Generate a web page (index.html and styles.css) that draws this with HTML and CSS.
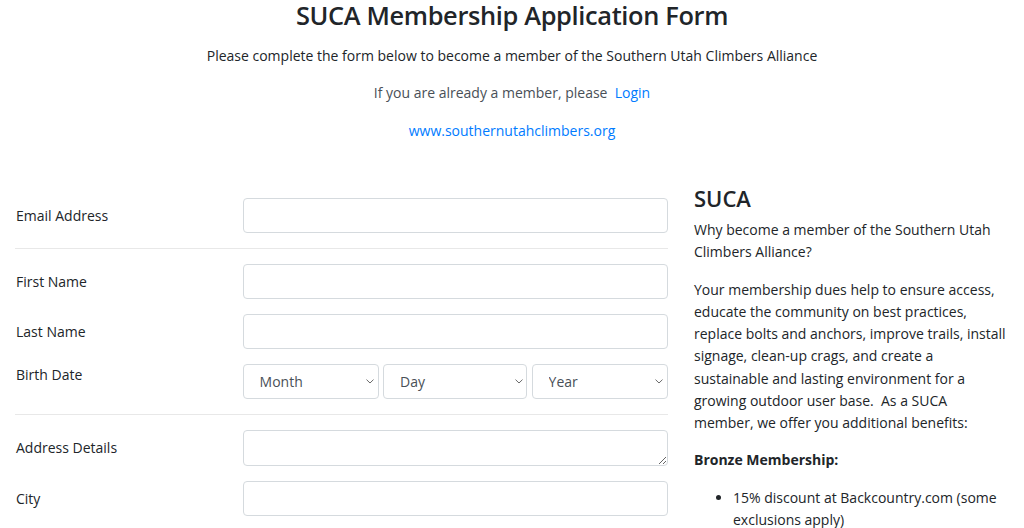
FILE: index.html
```html
<!DOCTYPE html>
<html lang="en">
<head>
<meta charset="utf-8">
<title>SUCA Membership Application Form</title>
<link rel="stylesheet" href="styles.css">
</head>
<body>
<header class="intro">
  <h1 class="title">SUCA Membership Application Form</h1>
  <p>Please complete the form below to become a member of the Southern Utah Climbers Alliance</p>
  <p class="muted">If you are already a member, please&nbsp; <a href="#">Login</a></p>
  <p><a href="#">www.southernutahclimbers.org</a></p>
</header>

<main class="layout">
  <form class="form">
    <div class="row">
      <label class="label col-label" for="email">Email Address</label>
      <input class="control" id="email" type="email">
    </div>
    <hr class="sep">
    <div class="row">
      <label class="label col-label" for="first">First Name</label>
      <input class="control" id="first" type="text">
    </div>
    <div class="row">
      <label class="label col-label" for="last">Last Name</label>
      <input class="control" id="last" type="text">
    </div>
    <div class="row">
      <label class="label">Birth Date</label>
      <div class="dates">
        <div class="select-wrap">
          <select class="control select"><option>Month</option></select>
          <svg class="chev" width="8" height="5" viewBox="0 0 8 5"><path d="M0.5 0.6 L4 4 L7.5 0.6" fill="none" stroke="#6b6b6b" stroke-width="1"/></svg>
        </div>
        <div class="select-wrap">
          <select class="control select"><option>Day</option></select>
          <svg class="chev" width="8" height="5" viewBox="0 0 8 5"><path d="M0.5 0.6 L4 4 L7.5 0.6" fill="none" stroke="#6b6b6b" stroke-width="1"/></svg>
        </div>
        <div class="select-wrap">
          <select class="control select"><option>Year</option></select>
          <svg class="chev" width="8" height="5" viewBox="0 0 8 5"><path d="M0.5 0.6 L4 4 L7.5 0.6" fill="none" stroke="#6b6b6b" stroke-width="1"/></svg>
        </div>
      </div>
    </div>
    <hr class="sep">
    <div class="row">
      <label class="label col-label" for="address">Address Details</label>
      <textarea class="control textarea" id="address" rows="1"></textarea>
    </div>
    <div class="row">
      <label class="label col-label" for="city">City</label>
      <input class="control" id="city" type="text">
    </div>
  </form>

  <aside class="aside">
    <h2 class="aside-title">SUCA</h2>
    <p>Why become a member of the Southern Utah Climbers Alliance?</p>
    <p>Your membership dues help to ensure access, educate the community on best practices, replace bolts and anchors, improve trails, install signage, clean-up crags, and create a sustainable and lasting environment for a growing outdoor user base.&nbsp; As a SUCA member, we offer you additional benefits:</p>
    <p class="strong">Bronze Membership:</p>
    <ul class="list">
      <li>15% discount at Backcountry.com (some exclusions apply)</li>
    </ul>
  </aside>
</main>
</body>
</html>
```
FILE: styles.css
```css
html, body {
  margin: 0;
  padding: 0;
  background: #fff;
}

body {
  font-family: "Open Sans", "Noto Sans", sans-serif;
  font-size: 14px;
  line-height: 22.25px;
  color: #212529;
  overflow: hidden;
}

p {
  margin: 0 0 15px;
}

a {
  color: #007bff;
  text-decoration: none;
}

.intro {
  text-align: center;
  padding: 0 15px;
}

.title {
  font-size: 25.4px;
  font-weight: 600;
  letter-spacing: -0.35px;
  line-height: 30px;
  margin: 0 0 15px;
}

.muted {
  color: #495057;
}

.layout {
  display: grid;
  grid-template-columns: 652.67px 313px;
  column-gap: 26.33px;
  padding: 0 15px;
  margin-top: 43px;
  align-items: start;
}

.form {
  padding-top: 13px;
}

.row {
  display: grid;
  grid-template-columns: 197.56px 1fr;
  column-gap: 30px;
  margin-bottom: 15px;
  align-items: start;
}

.label {
  display: block;
  padding-left: 1px;
}

.col-label {
  padding-top: 7.5px;
}

.control {
  display: block;
  box-sizing: border-box;
  width: 100%;
  height: 35px;
  margin: 0;
  padding: 6px 12px;
  font-family: inherit;
  font-size: 14px;
  line-height: 21px;
  color: #495057;
  background: #fff;
  border: 1px solid #d5dade;
  border-radius: 4px;
}

.textarea {
  resize: vertical;
  height: 36px;
  min-height: 35px;
}

.sep {
  margin: 0 0 15px;
  border: 0;
  border-top: 1px solid #e8e8e8;
  height: 0;
}

.dates {
  display: grid;
  grid-template-columns: 136fr 144fr 136fr;
  column-gap: 4.5px;
}

.select-wrap {
  position: relative;
}

.select {
  -webkit-appearance: none;
  appearance: none;
  padding: 6px 20px 6px 16px;
}

.chev {
  position: absolute;
  right: 4.5px;
  top: 15px;
  pointer-events: none;
}

.aside-title {
  font-size: 22px;
  font-weight: 600;
  line-height: 26.4px;
  margin: 0 0 8px;
}

.strong {
  font-weight: 700;
}

.list {
  margin: 0;
  padding-left: 39px;
}
```
